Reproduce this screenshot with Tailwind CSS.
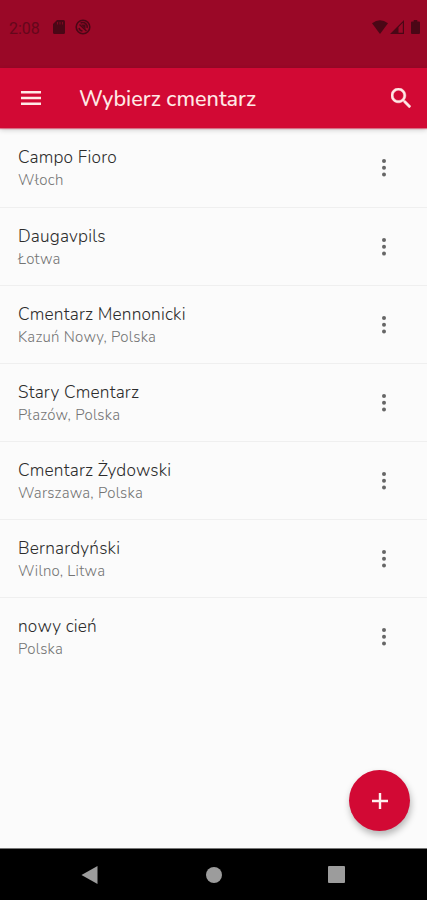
<!DOCTYPE html>
<html lang="pl">
<head>
<meta charset="utf-8">
<title>Wybierz cmentarz</title>
<script src="https://cdn.jsdelivr.net/npm/@tailwindcss/browser@4"></script>
</head>
<body class="bg-[#fbfbfb]">
<div class="relative flex h-[900px] w-[427px] flex-col overflow-hidden font-['Nunito','Open_Sans',sans-serif]">
  <div class="flex h-[68px] shrink-0 items-start bg-[#9a0827] pl-[9px] pr-[7px] pt-[18px] text-[#4a0716]">
    <span class="w-[44px] font-[Roboto,sans-serif] text-[16px] leading-[21px] text-[#65071b]">2:08</span>
    <svg class="mt-[2px] h-[14px] w-[12px]" viewBox="0 0 12 14"><path fill="currentColor" d="M4 0h6.500Q12 0 12 1.500V12.500Q12 14 10.500 14H1.500Q0 14 0 12.500V4Z"/><path stroke="#9a0827" stroke-width=".7" d="M4.500 2v2.500M7 2v2.500M9.500 2v2.500"/></svg>
    <svg class="ml-[10px] mt-[1px] h-[16px] w-[16px]" viewBox="0 0 16 16" fill="none" stroke="currentColor"><circle cx="8" cy="8" r="6.800" stroke-width="1.600"/><path stroke-width="1.500" d="M4.500 5.500l7 6.500M4 9A4 4 0 0 0 7.500 12M5.500 4.200A4.300 4.300 0 0 1 12 9"/><path fill="currentColor" stroke="none" d="M6 5.500h4.500v4.500z"/></svg>
    <svg class="ml-auto mt-[2px] h-[14px] w-[16px]" viewBox="0 0 16 14"><path fill="currentColor" d="M0 3.200Q8-2.600 16 3.200L8 14Z"/></svg>
    <svg class="ml-[2px] mt-[2px] h-[14px] w-[14px]" viewBox="0 0 14 14"><path fill="currentColor" d="M0 14 14 0V14ZM8.500 12.800H12.800V2.800L8.500 7.200Z" fill-rule="evenodd"/></svg>
    <svg class="ml-[7px] mt-[2px] h-[14px] w-[9px]" viewBox="0 0 9 14"><path fill="currentColor" d="M2.700 0h3.600v1.500H8Q9 1.500 9 2.500V13Q9 14 8 14H1Q0 14 0 13V2.500Q0 1.500 1 1.500H2.700Z"/></svg>
  </div>
  <header class="z-10 flex h-[60px] shrink-0 items-center bg-[#d20934] pl-[21px] pr-[16px] text-[#ffe9e6] shadow-[0_1px_1px_#d2093480,0_2px_5px_#00000030]">
    <svg class="h-[14px] w-[20px]" viewBox="0 0 20 14" stroke="currentColor" stroke-width="2.600"><path d="M0 1.300H20M0 7H20M0 12.700H20"/></svg>
    <h1 class="ml-[38px] mt-[1px] whitespace-nowrap text-[21.600px] font-medium leading-[28px]">Wybierz cmentarz</h1>
    <svg class="ml-auto h-[20px] w-[20px]" viewBox="3 3 17.500 17.500"><path fill="currentColor" stroke="currentColor" stroke-width=".4" d="M15.500 14h-.79l-.28-.27C15.410 12.590 16 11.110 16 9.500 16 5.910 13.090 3 9.500 3S3 5.910 3 9.500 5.910 16 9.500 16c1.610 0 3.090-.59 4.230-1.570l.27.28v.79l5 4.990L20.490 19l-4.990-5zm-6 0C7.010 14 5 11.990 5 9.500S7.010 5 9.500 5 14 7.010 14 9.500 11.990 14 9.500 14z"/></svg>
  </header>
  <main class="flex-1 pt-[1.400px]">
    <ul class="flex flex-col">
      <li class="flex h-[78.150px] justify-between border-b border-[#efefef] pl-[18px] pr-[41px] pt-[17px]"><div><p class="text-[17.300px] font-light leading-[24px] tracking-[0.180px] text-[#2c2c2c]">Campo Fioro</p><p class="text-[15px] font-light leading-[20px] tracking-[0.250px] text-[#747474]">Włoch</p></div><svg class="mt-[13px] h-[18px] w-[4px]" viewBox="0 0 4 18" fill="#666"><circle cx="2" cy="2" r="2"/><circle cx="2" cy="8.800" r="2"/><circle cx="2" cy="15.600" r="2"/></svg></li>
      <li class="flex h-[78.150px] justify-between border-b border-[#efefef] pl-[18px] pr-[41px] pt-[17px]"><div><p class="text-[17.300px] font-light leading-[24px] tracking-[0.180px] text-[#2c2c2c]">Daugavpils</p><p class="text-[15px] font-light leading-[20px] tracking-[0.250px] text-[#747474]">Łotwa</p></div><svg class="mt-[13px] h-[18px] w-[4px]" viewBox="0 0 4 18" fill="#666"><circle cx="2" cy="2" r="2"/><circle cx="2" cy="8.800" r="2"/><circle cx="2" cy="15.600" r="2"/></svg></li>
      <li class="flex h-[78.150px] justify-between border-b border-[#efefef] pl-[18px] pr-[41px] pt-[17px]"><div><p class="text-[17.300px] font-light leading-[24px] tracking-[0.180px] text-[#2c2c2c]">Cmentarz Mennonicki</p><p class="text-[15px] font-light leading-[20px] tracking-[0.250px] text-[#747474]">Kazuń Nowy, Polska</p></div><svg class="mt-[13px] h-[18px] w-[4px]" viewBox="0 0 4 18" fill="#666"><circle cx="2" cy="2" r="2"/><circle cx="2" cy="8.800" r="2"/><circle cx="2" cy="15.600" r="2"/></svg></li>
      <li class="flex h-[78.150px] justify-between border-b border-[#efefef] pl-[18px] pr-[41px] pt-[17px]"><div><p class="text-[17.300px] font-light leading-[24px] tracking-[0.180px] text-[#2c2c2c]">Stary Cmentarz</p><p class="text-[15px] font-light leading-[20px] tracking-[0.250px] text-[#747474]">Płazów, Polska</p></div><svg class="mt-[13px] h-[18px] w-[4px]" viewBox="0 0 4 18" fill="#666"><circle cx="2" cy="2" r="2"/><circle cx="2" cy="8.800" r="2"/><circle cx="2" cy="15.600" r="2"/></svg></li>
      <li class="flex h-[78.150px] justify-between border-b border-[#efefef] pl-[18px] pr-[41px] pt-[17px]"><div><p class="text-[17.300px] font-light leading-[24px] tracking-[0.180px] text-[#2c2c2c]">Cmentarz Żydowski</p><p class="text-[15px] font-light leading-[20px] tracking-[0.250px] text-[#747474]">Warszawa, Polska</p></div><svg class="mt-[13px] h-[18px] w-[4px]" viewBox="0 0 4 18" fill="#666"><circle cx="2" cy="2" r="2"/><circle cx="2" cy="8.800" r="2"/><circle cx="2" cy="15.600" r="2"/></svg></li>
      <li class="flex h-[78.150px] justify-between border-b border-[#efefef] pl-[18px] pr-[41px] pt-[17px]"><div><p class="text-[17.300px] font-light leading-[24px] tracking-[0.180px] text-[#2c2c2c]">Bernardyński</p><p class="text-[15px] font-light leading-[20px] tracking-[0.250px] text-[#747474]">Wilno, Litwa</p></div><svg class="mt-[13px] h-[18px] w-[4px]" viewBox="0 0 4 18" fill="#666"><circle cx="2" cy="2" r="2"/><circle cx="2" cy="8.800" r="2"/><circle cx="2" cy="15.600" r="2"/></svg></li>
      <li class="flex h-[78.150px] justify-between pl-[18px] pr-[41px] pt-[17px]"><div><p class="text-[17.300px] font-light leading-[24px] tracking-[0.180px] text-[#2c2c2c]">nowy cień</p><p class="text-[15px] font-light leading-[20px] tracking-[0.250px] text-[#747474]">Polska</p></div><svg class="mt-[13px] h-[18px] w-[4px]" viewBox="0 0 4 18" fill="#666"><circle cx="2" cy="2" r="2"/><circle cx="2" cy="8.800" r="2"/><circle cx="2" cy="15.600" r="2"/></svg></li>
    </ul>
  </main>
  <button class="absolute bottom-[69px] right-[17px] flex h-[61px] w-[61px] items-center justify-center rounded-full bg-[#d20934] shadow-[1px_4px_7px_#00000048]" aria-label="Dodaj">
    <svg class="h-[16px] w-[16px]" viewBox="0 0 16 16" stroke="#fff0ee" stroke-width="2.400"><path d="M8 0V16M0 8H16"/></svg>
  </button>
  <nav class="flex h-[52px] shrink-0 items-center border-t border-[#777] bg-black pl-[81px] pr-[82px]">
    <svg class="h-[18px] w-[17px]" viewBox="0 0 17 18"><path fill="#9c9c9c" d="M.5 9 16.500 0V18Z"/></svg>
    <span class="ml-[108px] h-[16px] w-[16px] rounded-full bg-[#9c9c9c]"></span>
    <span class="ml-auto h-[17px] w-[17px] rounded-[1px] bg-[#9c9c9c]"></span>
  </nav>
</div>
</body>
</html>
